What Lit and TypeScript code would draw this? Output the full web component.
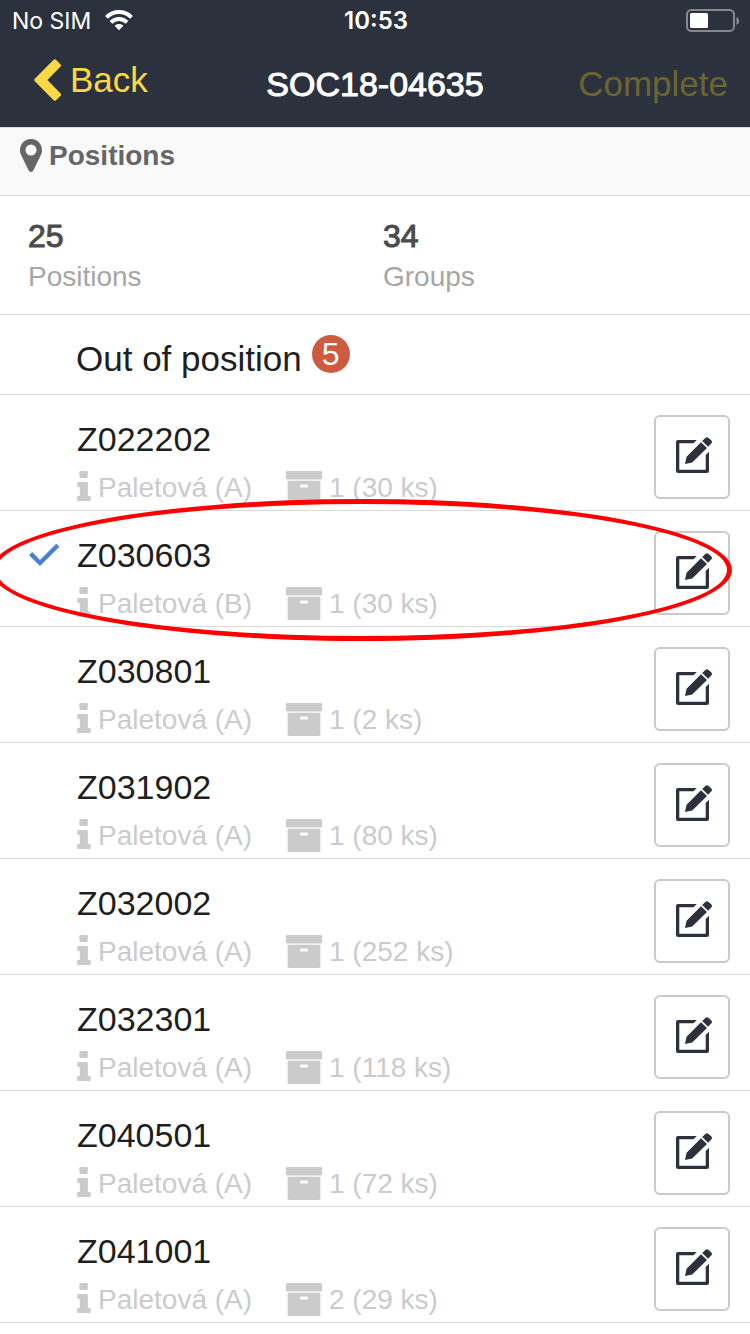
import { LitElement, html, css, svg, nothing } from "lit";
import { customElement, property } from "lit/decorators.js";

interface Position {
  code: string;
  kind: string;
  amount: string;
  done?: boolean;
}

const POSITIONS: Position[] = [
  { code: "Z022202", kind: "Paletová (A)", amount: "1 (30 ks)" },
  { code: "Z030603", kind: "Paletová (B)", amount: "1 (30 ks)", done: true },
  { code: "Z030801", kind: "Paletová (A)", amount: "1 (2 ks)" },
  { code: "Z031902", kind: "Paletová (A)", amount: "1 (80 ks)" },
  { code: "Z032002", kind: "Paletová (A)", amount: "1 (252 ks)" },
  { code: "Z032301", kind: "Paletová (A)", amount: "1 (118 ks)" },
  { code: "Z040501", kind: "Paletová (A)", amount: "1 (72 ks)" },
  { code: "Z041001", kind: "Paletová (A)", amount: "2 (29 ks)" },
];

const icon = (w: number, h: number, body: unknown) => html`
  <svg width=${w} height=${h} viewBox="0 0 ${w} ${h}" fill="currentColor" aria-hidden="true">${body}</svg>`;

const wifiIcon = icon(28, 21, svg`
  <g fill="none" stroke="currentColor" stroke-width="4">
    <path d="M1.5 7.4C8.4.3 19.6.3 26.5 7.4"/>
    <path d="M6 12.3C10.5 7.8 17.5 7.8 22 12.3"/>
  </g>
  <path d="M14 20.2L9.6 15.8C12 13.5 16 13.5 18.4 15.8Z"/>`);

const batteryIcon = icon(54, 24, svg`
  <rect x="1" y="1" width="47" height="21" rx="4.5" fill="none" stroke="#85888f" stroke-width="2"/>
  <path d="M50.5 8C54 9.2 54 14.8 50.5 16Z" fill="#85888f"/>
  <rect x="4" y="4" width="18" height="15" rx="1.5"/>`);

const chevronIcon = icon(28, 42, svg`
  <path d="M19.6.8Q20.8-.3 22 .8L26.6 5.4Q27.7 6.5 26.6 7.6L13.4 21L26.6 34.6Q27.7 35.7 26.6 36.8L22 41.3Q20.8 42.4 19.6 41.3L.8 22.2Q-.3 21 .8 19.8Z"/>`);

const pinIcon = icon(22, 33, svg`
  <path fill-rule="evenodd" d="M11 0C4.9 0 0 4.9 0 11C0 13 .4 14.4 1.1 15.9L8.6 31.3C9.1 32.4 10 33 11 33C12 33 12.9 32.4 13.4 31.3L20.9 15.9C21.6 14.4 22 13 22 11C22 4.9 17.1 0 11 0ZM11 5.5A5.5 5.5 0 0 1 11 16.5A5.5 5.5 0 0 1 11 5.5Z"/>`);

const infoIcon = icon(14, 32, svg`
  <rect x="2.4" y="0" width="8.4" height="7" rx="1.2"/>
  <path d="M1.4 11H9.6Q10.9 11 10.9 12.3V25H12.6Q13.8 25 13.8 26.3V28.7Q13.8 30 12.6 30H1.3Q0 30 0 28.7V26.3Q0 25 1.3 25H2.8V16H1.4Q.2 16 .2 14.7V12.3Q.2 11 1.4 11Z"/>`);

const boxIcon = icon(36, 34, svg`
  <rect x="0" y="0" width="36" height="8.4" rx="1.4"/>
  <path fill-rule="evenodd" d="M2.8 9.8H33Q34.4 9.8 34.4 11.2V31.6Q34.4 33 33 33H3Q1.6 33 1.6 31.6V11.2Q1.6 9.8 2.8 9.8ZM15.2 13.6A1.4 1.4 0 0 0 15.2 16.4H20.8A1.4 1.4 0 0 0 20.8 13.6Z"/>`);

const checkIcon = icon(31, 24, svg`
  <path d="M1.6 10.6L11 20L28.8 2.2" fill="none" stroke="currentColor" stroke-width="4.4"/>`);

const editIcon = icon(40, 40, svg`
  <path d="M24.8 3H6Q4 3 4 5V34Q4 36 6 36H35Q37 36 37 34V14.8L33.7 18.1V32.7H7.3V6.3H21.5Z"/>
  <path d="M13 27L14.6 19.8L29 5.2L35 11L20.2 25.5Z"/>
  <path d="M30.2 4L33.6 .7Q35-.4 36.3 .7L39.4 3.6Q40.5 4.9 39.4 6.2L36.1 9.7Z"/>`);

@customElement("position-row")
export class PositionRow extends LitElement {
  @property({ attribute: false }) item!: Position;

  static styles = css`
    :host {
      display: grid;
      grid-template-columns: 77px 1fr auto;
      align-items: start;
      position: relative;
      border-bottom: 1px solid #d9dadb;
      padding-right: 20px;
    }
    .mark {
      display: flex;
      align-items: center;
      height: 40px;
      margin-top: 24px;
      padding-left: 29px;
      color: #4d7fcc;
    }
    .main {
      padding: 24px 0 6px;
    }
    .code {
      font-size: 34px;
      line-height: 40px;
      color: #1e1f21;
    }
    .details {
      display: grid;
      grid-template-columns: 209px 1fr;
      margin-top: 12px;
      font-size: 28px;
      line-height: 33px;
      color: #cbcbcb;
    }
    .detail {
      display: flex;
      gap: 7px;
      height: 33px;
      white-space: nowrap;
    }
    .edit {
      display: flex;
      align-items: center;
      justify-content: center;
      width: 76px;
      height: 84px;
      margin-top: 20px;
      padding: 0;
      border: 2px solid #cacaca;
      border-radius: 6px;
      background: #fff;
      color: #2c323d;
    }
    .highlight {
      position: absolute;
      inset: -12px 18px -15px -9px;
      border: 5px solid #f00;
      border-radius: 50%;
      pointer-events: none;
    }
  `;

  render() {
    const { code, kind, amount, done } = this.item;
    return html`
      <div class="mark">${done ? checkIcon : nothing}</div>
      <div class="main">
        <div class="code">${code}</div>
        <div class="details">
          <span class="detail">${infoIcon}<span>${kind}</span></span>
          <span class="detail">${boxIcon}<span>${amount}</span></span>
        </div>
      </div>
      <button class="edit" type="button" aria-label="Edit ${code}">${editIcon}</button>
      ${done ? html`<div class="highlight"></div>` : nothing}
    `;
  }
}

@customElement("app-root")
export class AppRoot extends LitElement {
  static styles = css`
    :host {
      display: block;
      min-height: 100vh;
      overflow: hidden;
      background: #fff;
      font-family: "Liberation Sans", Arial, sans-serif;
    }
    .top {
      background: #2c323d;
      color: #fff;
    }
    .status,
    .nav {
      display: grid;
      grid-template-columns: 1fr auto 1fr;
      align-items: center;
    }
    .status {
      height: 41px;
      padding: 0 10px 0 12px;
      font-family: Inter, sans-serif;
      font-size: 23px;
      line-height: 28px;
    }
    .carrier {
      display: flex;
      align-items: center;
      gap: 14px;
    }
    .time {
      font-size: 24px;
      font-weight: 600;
    }
    .battery {
      display: flex;
      justify-self: end;
    }
    .nav {
      height: 86px;
      padding: 0 22px;
      font-size: 34px;
      line-height: 40px;
    }
    .nav button {
      padding: 0;
      border: 0;
      background: none;
      color: #f8d847;
      font-family: inherit;
      font-size: 35px;
      line-height: 40px;
    }
    .nav .back {
      display: flex;
      align-items: center;
      gap: 8px;
      justify-self: start;
      padding: 0 0 8px 12px;
    }
    .nav .complete {
      justify-self: end;
      color: #6b6433;
    }
    .title {
      margin: 0;
      font-size: 34px;
      font-weight: 400;
      -webkit-text-stroke: 1px currentColor;
    }
    .section {
      display: flex;
      gap: 7px;
      margin: 0;
      padding: 11px 20px 22px;
      border-top: 1px solid #dadadc;
      border-bottom: 1px solid #dcdcdd;
      background: #f9f9f9;
      color: #666;
      font-size: 28px;
      line-height: 34px;
    }
    .stats {
      display: grid;
      grid-template-columns: 1fr 1fr;
      margin: 0;
      padding: 20px 12px 16px 28px;
      border-bottom: 1px solid #d9dadb;
    }
    .stat {
      display: flex;
      flex-direction: column-reverse;
    }
    .stat dd {
      margin: 0;
      color: #4a4b4c;
      font-size: 32px;
      font-weight: 400;
      line-height: 40px;
      -webkit-text-stroke: 1px currentColor;
    }
    .stat dt {
      color: #a6a6a6;
      font-size: 28px;
      line-height: 42px;
    }
    .outside {
      display: flex;
      align-items: flex-start;
      gap: 10px;
      padding: 20px 20px 11px 76px;
      border-bottom: 1px solid #d9dadb;
      color: #1e1f21;
      font-size: 35px;
      line-height: 48px;
    }
    .badge {
      width: 38px;
      height: 38px;
      border-radius: 50%;
      background: #cd5b40;
      color: #fff;
      font-size: 32px;
      line-height: 38px;
      text-align: center;
    }
  `;

  render() {
    return html`
      <header class="top">
        <div class="status">
          <span class="carrier">No SIM ${wifiIcon}</span>
          <span class="time">10:53</span>
          <span class="battery">${batteryIcon}</span>
        </div>
        <nav class="nav">
          <button class="back" type="button">${chevronIcon}<span>Back</span></button>
          <h1 class="title">SOC18-04635</h1>
          <button class="complete" type="button" disabled>Complete</button>
        </nav>
      </header>
      <main>
        <h2 class="section">${pinIcon}<span>Positions</span></h2>
        <dl class="stats">
          <div class="stat"><dt>Positions</dt><dd>25</dd></div>
          <div class="stat"><dt>Groups</dt><dd>34</dd></div>
        </dl>
        <div class="outside"><span>Out of position</span><span class="badge">5</span></div>
        ${POSITIONS.map((p) => html`<position-row .item=${p}></position-row>`)}
      </main>
    `;
  }
}
